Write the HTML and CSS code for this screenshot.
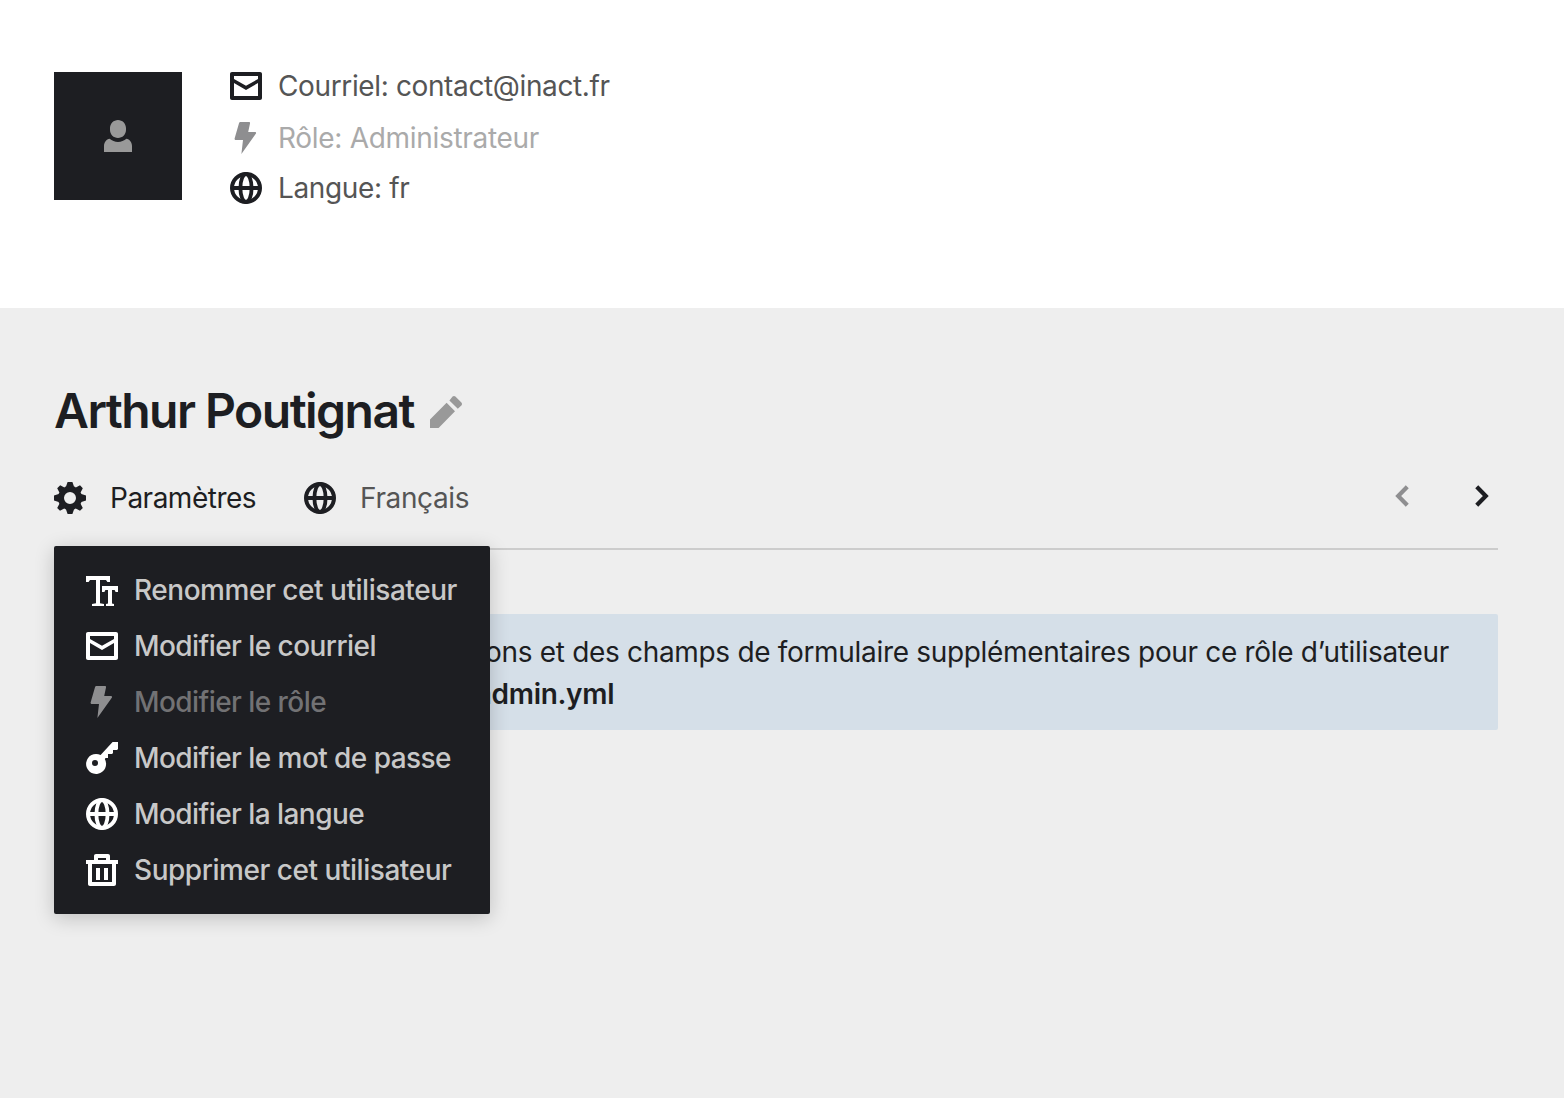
FILE: index.html
```html
<!DOCTYPE html>
<html lang="fr">
<head>
<meta charset="utf-8">
<title>Arthur Poutignat</title>
<link rel="stylesheet" href="styles.css">
</head>
<body>
<svg class="sprite" aria-hidden="true">
  <symbol id="email" viewBox="0 0 16 16"><path fill-rule="evenodd" d="M15 1H1C.4 1 0 1.400 0 2v12c0 .6.4 1 1 1h14c.6 0 1-.4 1-1V2c0-.6-.4-1-1-1zM14 13H2V6.500L8 10l6-3.500zM14 4.500L8 7.900 2 4.500V3h12z"/></symbol>
  <symbol id="bolt" viewBox="0 0 16 16"><path d="M5.300 0H9.500c.4 0 .6.3.5.7L9.100 5h3.400c.5 0 .7.5.4.9L5.700 16l.8-7H2.900c-.4 0-.7-.4-.6-.8L4.500.6C4.600.2 4.900 0 5.300 0z"/></symbol>
  <symbol id="globe" viewBox="0 0 16 16"><g fill="none" stroke="currentColor"><circle cx="8" cy="8" r="7" stroke-width="2"/><ellipse cx="8" cy="8" rx="2.800" ry="7" stroke-width="1.900"/><path d="M1 8h14" stroke-width="2"/></g></symbol>
  <symbol id="user" viewBox="0 0 16 16"><path d="M8 9C5.800 9 4 7.200 4 5V4c0-2.200 1.800-4 4-4s4 1.800 4 4v1c0 2.200-1.800 4-4 4zM12.200 9.400C11.100 10.400 9.600 11 8 11s-3-.6-4.200-1.600C2.200 9.700 1 11.200 1 13v3h14v-3c0-1.800-1.200-3.300-2.800-3.600z"/></symbol>
  <symbol id="pencil" viewBox="0 0 16 16"><path d="M8.300 3.400L12.500 7.600 4.300 16H0v-4.300zM11.300.3c.4-.4 1-.4 1.400 0l3 3c.4.4.4 1 0 1.400L13.900 6.400 9.700 2.200z"/></symbol>
  <symbol id="gear" viewBox="0 0 16 16"><path fill-rule="evenodd" d="M13.300 5.200l1.100-2.100L13 1.600l-2.100 1.100c-.3-.2-.6-.3-.9-.4L9.200 0H6.800L6 2.300c-.3.1-.6.2-.8.4L3.100 1.600 1.600 3.100l1.100 2.100c-.2.2-.3.5-.4.8L0 6.800v2.400l2.300.8c.1.3.2.6.4.9L1.600 13 3 14.400l2.100-1.100c.3.2.6.3.9.4l.8 2.300h2.400l.8-2.300c.3-.1.6-.2.9-.4l2.100 1.100 1.400-1.400-1.100-2.100c.2-.3.3-.6.4-.9l2.300-.8V6.800L13.700 6c-.1-.3-.2-.6-.4-.8zM8 11a3 3 0 1 1 0-6 3 3 0 0 1 0 6z"/></symbol>
  <symbol id="title" viewBox="0 0 16 16"><path d="M0 1h12v3h-1.300L10 3H7v11.600L9 15v1H3v-1l2-.4V3H2L1.300 4H0zM8 6h8v3h-1.200L14.300 8H13v6.700l1 .3v1h-4v-1l1-.3V8H9.700L9.200 9H8z"/></symbol>
  <symbol id="key" viewBox="0 0 16 16"><path fill-rule="evenodd" d="M13.300 0H16v3.500l-.5.5h-2v1.500l-.5.5h-2v2H9.800l-.4.5A5 5 0 1 1 7.300 6.500zM4.500 12a1.500 1.500 0 1 0 0-3 1.500 1.500 0 0 0 0 3z"/></symbol>
  <symbol id="trash" viewBox="0 0 16 16"><path fill-rule="evenodd" d="M5 0h6c.6 0 1 .4 1 1v2h4v2h-1v10c0 .6-.4 1-1 1H2c-.6 0-1-.4-1-1V5H0V3h4V1c0-.6.4-1 1-1zM6 2v1h4V2zM3 5v9h10V5zM5 7h2v6H5zM9 7h2v6H9z"/></symbol>
  <symbol id="angle-left" viewBox="0 0 16 16"><path d="M9.900 4.100L6.100 8l3.800 3.900" fill="none" stroke="currentColor" stroke-width="2.100" stroke-linecap="square"/></symbol>
  <symbol id="angle-right" viewBox="0 0 16 16"><path d="M6.100 4.100L9.900 8l-3.800 3.900" fill="none" stroke="currentColor" stroke-width="2.100" stroke-linecap="square"/></symbol>
</svg>

<header class="profile">
  <div class="avatar"><svg class="icon"><use href="#user"/></svg></div>
  <ul class="facts">
    <li class="fact"><svg class="icon"><use href="#email"/></svg><span class="label">Courriel: contact@inact.fr</span></li>
    <li class="fact fact-disabled"><svg class="icon"><use href="#bolt"/></svg><span class="label">Rôle: Administrateur</span></li>
    <li class="fact"><svg class="icon"><use href="#globe"/></svg><span class="label">Langue: fr</span></li>
  </ul>
</header>

<main class="content">
  <h1 class="headline"><span class="name">Arthur Poutignat</span><svg class="icon"><use href="#pencil"/></svg></h1>
  <div class="toolbar">
    <div class="settings">
      <button class="button"><svg class="icon"><use href="#gear"/></svg><span class="label">Paramètres</span></button>
      <ul class="menu">
        <li class="item item-wide"><svg class="icon"><use href="#title"/></svg><span class="label">Renommer cet utilisateur</span></li>
        <li class="item"><svg class="icon"><use href="#email"/></svg><span class="label">Modifier le courriel</span></li>
        <li class="item item-disabled"><svg class="icon"><use href="#bolt"/></svg><span class="label">Modifier le rôle</span></li>
        <li class="item"><svg class="icon"><use href="#key"/></svg><span class="label">Modifier le mot de passe</span></li>
        <li class="item"><svg class="icon"><use href="#globe"/></svg><span class="label">Modifier la langue</span></li>
        <li class="item item-wide"><svg class="icon"><use href="#trash"/></svg><span class="label">Supprimer cet utilisateur</span></li>
      </ul>
    </div>
    <button class="button language"><svg class="icon"><use href="#globe"/></svg><span class="label">Français</span></button>
    <nav class="pager">
      <svg class="icon prev"><use href="#angle-left"/></svg>
      <svg class="icon"><use href="#angle-right"/></svg>
    </nav>
  </div>
  <p class="notice">Vous pouvez définir des sections et des champs de formulaire supplémentaires pour ce rôle d’utilisateur<br><span class="path">dans <strong>/site/blueprints/users/admin.yml</strong></span></p>
</main>
</body>
</html>
```
FILE: styles.css
```css
* { box-sizing: border-box; }

body {
  margin: 0;
  min-height: 1098px;
  background: #eee;
  color: #1d1e22;
  font: 28px/42px Inter, "Noto Sans", sans-serif;
  letter-spacing: -.37px;
}

ul { margin: 0; padding: 0; list-style: none; }

.sprite { display: none; }

.icon {
  display: block;
  flex: none;
  width: 32px;
  height: 32px;
  fill: currentColor;
}

.profile {
  display: flex;
  gap: 48px;
  height: 308px;
  padding: 72px 54px 0;
  background: #fff;
}

.avatar {
  display: grid;
  place-items: center;
  width: 128px;
  height: 128px;
  background: #1d1e22;
  color: #999;
}

.facts {
  display: flex;
  flex-direction: column;
  gap: 8px;
  margin-top: -7px;
}

.fact { display: flex; align-items: center; gap: 16px; }
.fact .label { color: #555; }
.fact-disabled { padding-top: 2px; letter-spacing: -.3px; }
.fact-disabled .icon { color: #8e8e90; }
.fact-disabled .label { color: #aaa; }

.content { padding: 72px 66px 0 54px; }

.headline {
  display: flex;
  align-items: center;
  gap: 16px;
  height: 64px;
  margin: 0;
  font-size: 48px;
  line-height: 64px;
  font-weight: 600;
  letter-spacing: -1.54px;
}
.headline .name { padding-bottom: 2px; }
.headline .icon { color: #999; }

.toolbar {
  display: flex;
  align-items: center;
  gap: 48px;
  height: 106px;
  padding-top: 4px;
  border-bottom: 2px solid #ccc;
}

.settings { position: relative; }

.button {
  display: flex;
  align-items: center;
  gap: 24px;
  padding: 0;
  border: 0;
  background: none;
  color: inherit;
  font: inherit;
  letter-spacing: -.5px;
}
.language { letter-spacing: -.37px; }
.language .label { color: #555; }

.pager { display: flex; gap: 48px; margin: -4px 0 0 auto; }
.prev { color: #8e8e90; }

.menu {
  position: absolute;
  z-index: 1;
  top: 69px;
  left: 0;
  width: 436px;
  height: 368px;
  padding: 16px 32px;
  border-radius: 2px;
  background: #1d1e22;
  color: #fff;
  box-shadow: 0 4px 20px rgba(0, 0, 0, .2);
}
.item {
  display: flex;
  align-items: center;
  gap: 16px;
  height: 56px;
  font-weight: 450;
  letter-spacing: -.56px;
  white-space: nowrap;
}
.item-wide { letter-spacing: -.46px; }
.item .label { color: #c8c8c8; }
.item-disabled .icon { color: #8e8e90; }
.item-disabled .label { color: #727274; }

.notice {
  height: 116px;
  margin: 64px 0 0;
  padding: 17px 24px 0 50px;
  border-radius: 2px;
  background: #d5dfe8;
  letter-spacing: -.32px;
  white-space: nowrap;
}
.path { margin-left: 5px; }
.notice strong { font-weight: 600; }
```
